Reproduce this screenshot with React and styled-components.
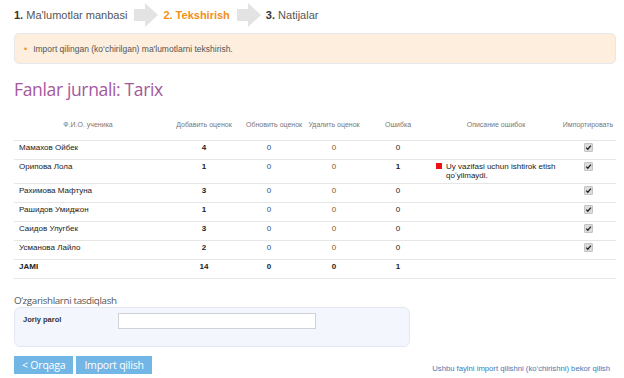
import React from 'react';
import styled, {createGlobalStyle} from 'styled-components';

const Global = createGlobalStyle`
  html, body { margin: 0; padding: 0; background: #fff; }
  body { font-family: "Liberation Sans", Arial, sans-serif; color: #333; }
`;

const Page = styled.div`
  width: 624px;
  height: 378px;
  box-sizing: border-box;
  padding: 0 8px 0 14px;
  overflow: hidden;
`;

const Steps = styled.div`
  display: flex;
  align-items: center;
  height: 27px;
  padding-top: 1px;
  font-size: 11px;
`;

const Step = styled.div`
  color: ${(p) => (p.active ? '#f39019' : '#555')};
  font-weight: ${(p) => (p.active ? 'bold' : 'normal')};
  b { color: ${(p) => (p.active ? '#f39019' : '#333')}; }
`;

const Arrow = styled.svg`
  margin: 0 5px 0 7px;
  flex: none;
`;

const Alert = styled.div`
  margin-top: 5px;
  width: 602px;
  box-sizing: border-box;
  height: 31px;
  display: flex;
  align-items: center;
  padding-left: 9px;
  background: #fdeedd;
  border: 1px solid #e6e8ec;
  border-radius: 5px;
  font-size: 8.5px;
  color: #555;
  span { color: #f39019; margin-right: 6px; font-size: 9px; }
`;

const Title = styled.h1`
  margin: 14px 0 0;
  font-family: "Open Sans", sans-serif;
  font-weight: normal;
  font-size: 17.5px;
  letter-spacing: -0.35px;
  color: #a5579c;
  line-height: 22px;
`;

const Table = styled.table`
  margin-top: 10px;
  width: 602px;
  border-collapse: collapse;
  table-layout: fixed;
  font-size: 8px;
`;

const Th = styled.th`
  font-weight: normal;
  color: #777;
  font-size: 7px;
  height: 29px;
  white-space: nowrap;
  vertical-align: middle;
  text-align: center;
  padding: 0 0 1px ${(p) => p.shift || 0}px;
  border-bottom: 1px solid #e6e6e6;
`;

const Td = styled.td`
  height: 19px;
  padding: 2px ${(p) => (p.left ? '5px' : '0')} 0;
  box-sizing: border-box;
  line-height: 9px;
  text-align: ${(p) => (p.left ? 'left' : 'center')};
  vertical-align: top;
  border-bottom: 1px solid #e6e6e6;
  color: ${(p) => p.color || '#222'};
  font-weight: ${(p) => (p.bold ? 'bold' : 'normal')};
`;

const Err = styled.div`
  display: flex;
  align-items: flex-start;
  text-align: left;
  padding: 0 0 3px 16px;
  line-height: 9px;
  i {
    flex: none;
    width: 6px;
    height: 6px;
    background: #ee1111;
    margin: 1px 4px 0 0;
  }
  span { width: 118px; }
`;

const Check = styled.span`
  display: inline-block;
  width: 7px;
  height: 7px;
  border-radius: 1px;
  background: #dcdcdc;
  border: 1px solid #c4c4c4;
  position: relative;
  svg { position: absolute; left: 0; top: 0; }
`;

const Legend = styled.div`
  margin-top: 15px;
  font-family: "Open Sans", sans-serif;
  font-size: 9.8px;
  letter-spacing: -0.35px;
  color: #555;
  line-height: 13px;
`;

const Fieldset = styled.div`
  width: 396px;
  height: 40px;
  box-sizing: border-box;
  background: #f3f6fc;
  border: 1px solid #e3e8f0;
  border-radius: 6px;
  display: flex;
  align-items: flex-start;
  padding: 5px 0 0 8px;
  label {
    width: 95px;
    font-weight: bold;
    font-size: 7.5px;
    color: #333;
    padding-top: 2px;
  }
`;

const Input = styled.input`
  width: 198px;
  height: 16px;
  box-sizing: border-box;
  border: 1px solid #cfd3d8;
  background: #fff;
  margin: 0;
`;

const Footer = styled.div`
  margin-top: 9px;
  display: flex;
  align-items: center;
`;

const Button = styled.button`
  height: 18px;
  padding: 0 8px;
  margin-right: 3px;
  border: none;
  background: #72b6e6;
  color: #fff;
  font-family: "Open Sans", sans-serif;
  font-size: 10.5px;
  letter-spacing: -0.2px;
  line-height: 18px;
`;

const CancelLink = styled.a`
  margin-left: auto;
  margin-right: 6px;
  margin-top: 7px;
  font-size: 7.7px;
  color: #3d7cb8;
  text-decoration: none;
`;

const rows = [
  {name: 'Мамахов Ойбек', add: 4, err: 0},
  {name: 'Орипова Лола', add: 1, err: 1, desc: 'Uy vazifasi uchun ishtirok etish qo\u02bbyilmaydi.'},
  {name: 'Рахимова Мафтуна', add: 3, err: 0},
  {name: 'Рашидов Умиджон', add: 1, err: 0},
  {name: 'Саидов Улугбек', add: 3, err: 0},
  {name: 'Усманова Лайло', add: 2, err: 0},
];

const ArrowIcon = () => (
  <Arrow width="24" height="24" viewBox="0 0 24 24">
    <polygon points="0,6 11,6 11,0 24,12 11,24 11,18 0,18" fill="#e3e3e3" />
  </Arrow>
);

const CheckBox = () => (
  <Check>
    <svg width="7" height="7" viewBox="0 0 7 7">
      <path d="M1.2 3.6 L2.8 5.2 L5.9 1.6" stroke="#222" strokeWidth="1.3" fill="none" />
    </svg>
  </Check>
);

export default function App() {
  return (
    <Page>
      <Global />
      <Steps>
        <Step><b>1.</b> Ma'lumotlar manbasi</Step>
        <ArrowIcon />
        <Step active>2. Tekshirish</Step>
        <ArrowIcon />
        <Step><b>3.</b> Natijalar</Step>
      </Steps>
      <Alert><span>•</span>Import qilingan (ko‘chirilgan) ma'lumotlarni tekshirish.</Alert>
      <Title>Fanlar jurnali: Tarix</Title>
      <Table>
        <colgroup>
          <col style={{width: 148}} />
          <col style={{width: 84}} />
          <col style={{width: 46}} />
          <col style={{width: 84}} />
          <col style={{width: 44}} />
          <col style={{width: 140}} />
          <col style={{width: 56}} />
        </colgroup>
        <thead>
          <tr>
            <Th>Ф.И.О. ученика</Th>
            <Th>Добавить оценок</Th>
            <Th>Обновить оценок</Th>
            <Th>Удалить оценок</Th>
            <Th>Ошибка</Th>
            <Th shift={12}>Описание ошибок</Th>
            <Th>Импортировать</Th>
          </tr>
        </thead>
        <tbody>
          {rows.map((r) => (
            <tr key={r.name}>
              <Td left>{r.name}</Td>
              <Td bold>{r.add}</Td>
              <Td color="#24508a">0</Td>
              <Td color="#7a5a22">0</Td>
              <Td bold={r.err > 0}>{r.err}</Td>
              <Td>
                {r.desc && (
                  <Err><i /><span>{r.desc}</span></Err>
                )}
              </Td>
              <Td><CheckBox /></Td>
            </tr>
          ))}
          <tr>
            <Td left bold>JAMI</Td>
            <Td bold>14</Td>
            <Td bold>0</Td>
            <Td bold>0</Td>
            <Td bold>1</Td>
            <Td />
            <Td />
          </tr>
        </tbody>
      </Table>
      <Legend>O‘zgarishlarni tasdiqlash</Legend>
      <Fieldset>
        <label>Joriy parol</label>
        <Input type="password" />
      </Fieldset>
      <Footer>
        <Button>&lt; Orqaga</Button>
        <Button>Import qilish</Button>
        <CancelLink href="#">Ushbu faylni import qilishni (ko‘chirishni) bekor qilish</CancelLink>
      </Footer>
    </Page>
  );
}
